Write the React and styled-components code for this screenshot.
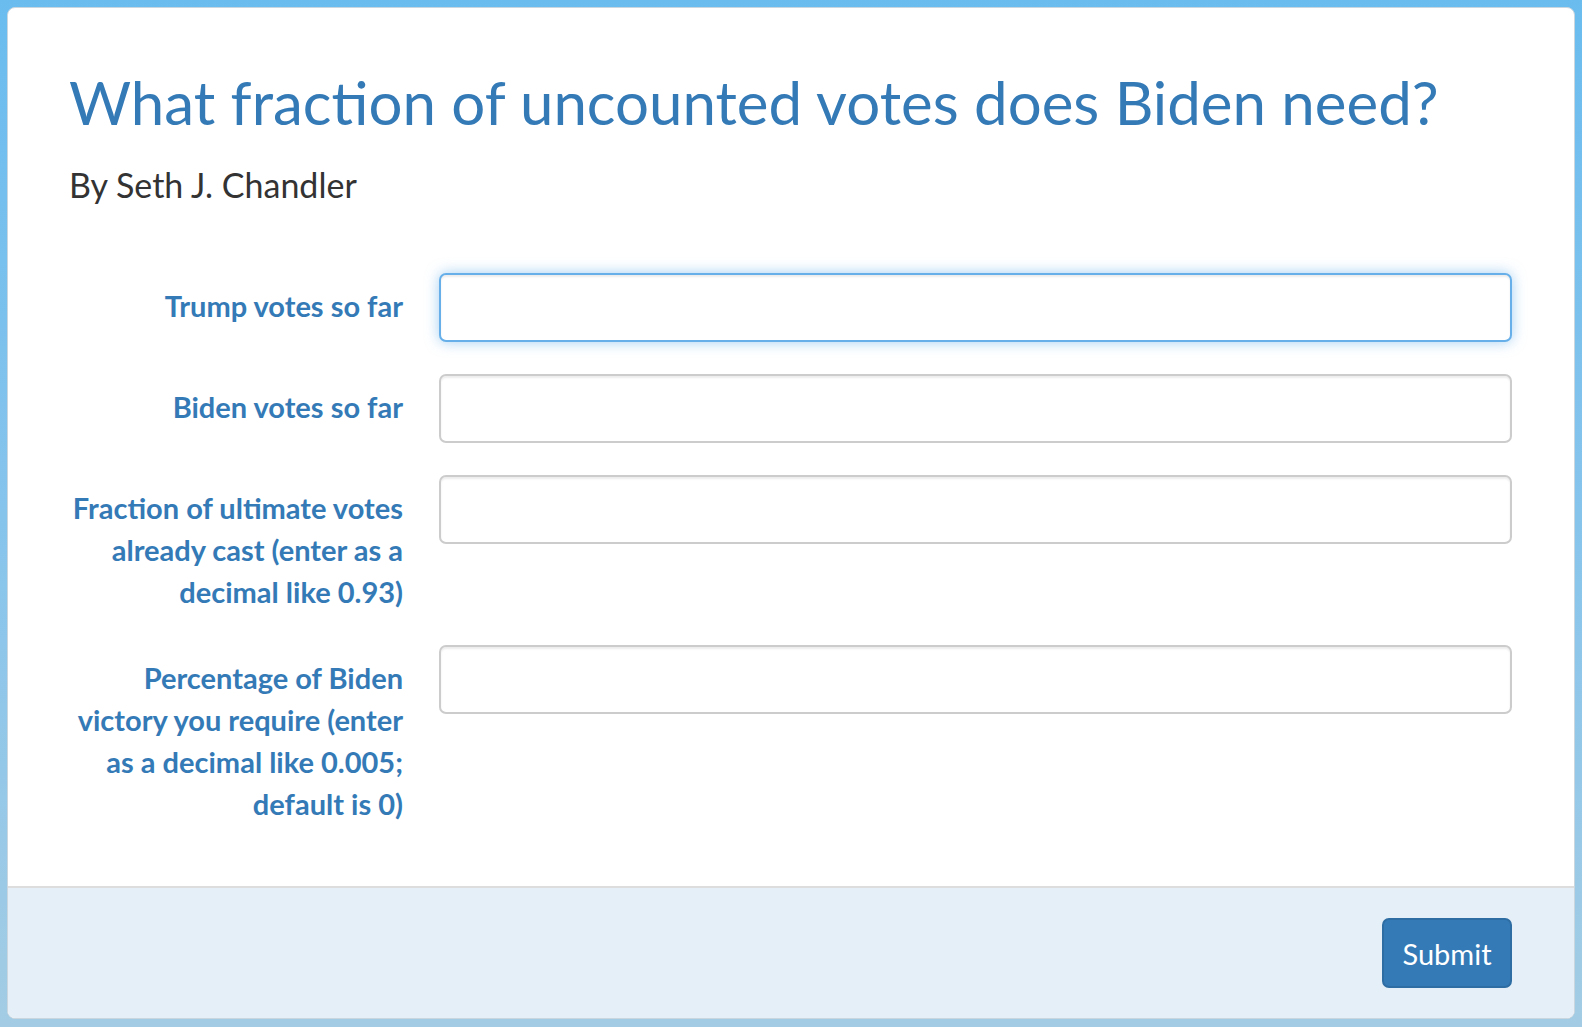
import React from 'react'
import styled, { createGlobalStyle } from 'styled-components'

const GlobalStyle = createGlobalStyle`
  html, body {
    margin: 0;
    padding: 0;
  }
  body {
    font-family: Lato, "Open Sans", sans-serif;
    color: #333;
  }
  * {
    box-sizing: border-box;
  }
`

const Page = styled.div`
  min-height: 100vh;
  padding: 7px;
  background: linear-gradient(180deg, #6abcef 0%, #86c4ec 50%, #a3cce4 100%);
`

const Card = styled.div`
  background: #fff;
  border: 1px solid #c9d6df;
  border-radius: 8px;
  overflow: hidden;
  display: flex;
  flex-direction: column;
`

const Body = styled.div`
  padding: 58px 62px 29px 61px;
`

const Title = styled.h1`
  margin: 0;
  font-family: Lato, sans-serif;
  font-weight: 400;
  font-size: 60px;
  line-height: 72px;
  white-space: nowrap;
  color: #337ab7;
`

const Byline = styled.p`
  margin: 25px 0 0;
  font-family: Lato, sans-serif;
  font-size: 34px;
  line-height: 44px;
  color: #333;
`

const Form = styled.form`
  margin-top: 66px;
`

const Row = styled.div`
  display: grid;
  grid-template-columns: 334px 1fr;
  column-gap: 36px;
  align-items: start;
  margin-bottom: 32px;
`

const Label = styled.label`
  padding-top: 12px;
  text-align: right;
  font-family: Lato, sans-serif;
  font-weight: 700;
  font-size: 29px;
  line-height: 42px;
  color: #337ab7;
`

const Input = styled.input`
  display: block;
  width: 100%;
  height: 69px;
  padding: 10px 20px;
  font-family: Lato, sans-serif;
  font-size: 28px;
  color: #555;
  background: #fff;
  border: 2px solid ${p => (p.$focused ? '#66afe9' : '#cccccc')};
  border-radius: 7px;
  outline: none;
  box-shadow: ${p =>
    p.$focused
      ? 'inset 0 2px 2px rgba(0,0,0,.075), 0 0 14px rgba(102,175,233,.6)'
      : 'inset 0 2px 2px rgba(0,0,0,.075)'};
`

const Footer = styled.div`
  display: flex;
  justify-content: flex-end;
  padding: 30px 62px 30px;
  background: #e5eff7;
  border-top: 2px solid #dddddd;
`

const Button = styled.button`
  width: 130px;
  height: 70px;
  padding: 0;
  font-family: Lato, sans-serif;
  font-size: 29px;
  color: #fff;
  background: #337ab7;
  border: 2px solid #2e6da4;
  border-radius: 7px;
  cursor: pointer;
`

const fields = [
  { id: 'trump', label: 'Trump votes so far', focused: true },
  { id: 'biden', label: 'Biden votes so far' },
  { id: 'fraction', label: 'Fraction of ultimate votes already cast (enter as a decimal like 0.93)' },
  { id: 'margin', label: 'Percentage of Biden victory you require (enter as a decimal like 0.005; default is 0)' },
]

export default function App() {
  return (
    <>
      <GlobalStyle />
      <Page>
        <Card>
          <Body>
            <Title>What fraction of uncounted votes does Biden need?</Title>
            <Byline>By Seth J. Chandler</Byline>
            <Form onSubmit={e => e.preventDefault()}>
              {fields.map(f => (
                <Row key={f.id}>
                  <Label htmlFor={f.id}>{f.label}</Label>
                  <Input id={f.id} type="text" $focused={f.focused} />
                </Row>
              ))}
            </Form>
          </Body>
          <Footer>
            <Button type="submit">Submit</Button>
          </Footer>
        </Card>
      </Page>
    </>
  )
}
